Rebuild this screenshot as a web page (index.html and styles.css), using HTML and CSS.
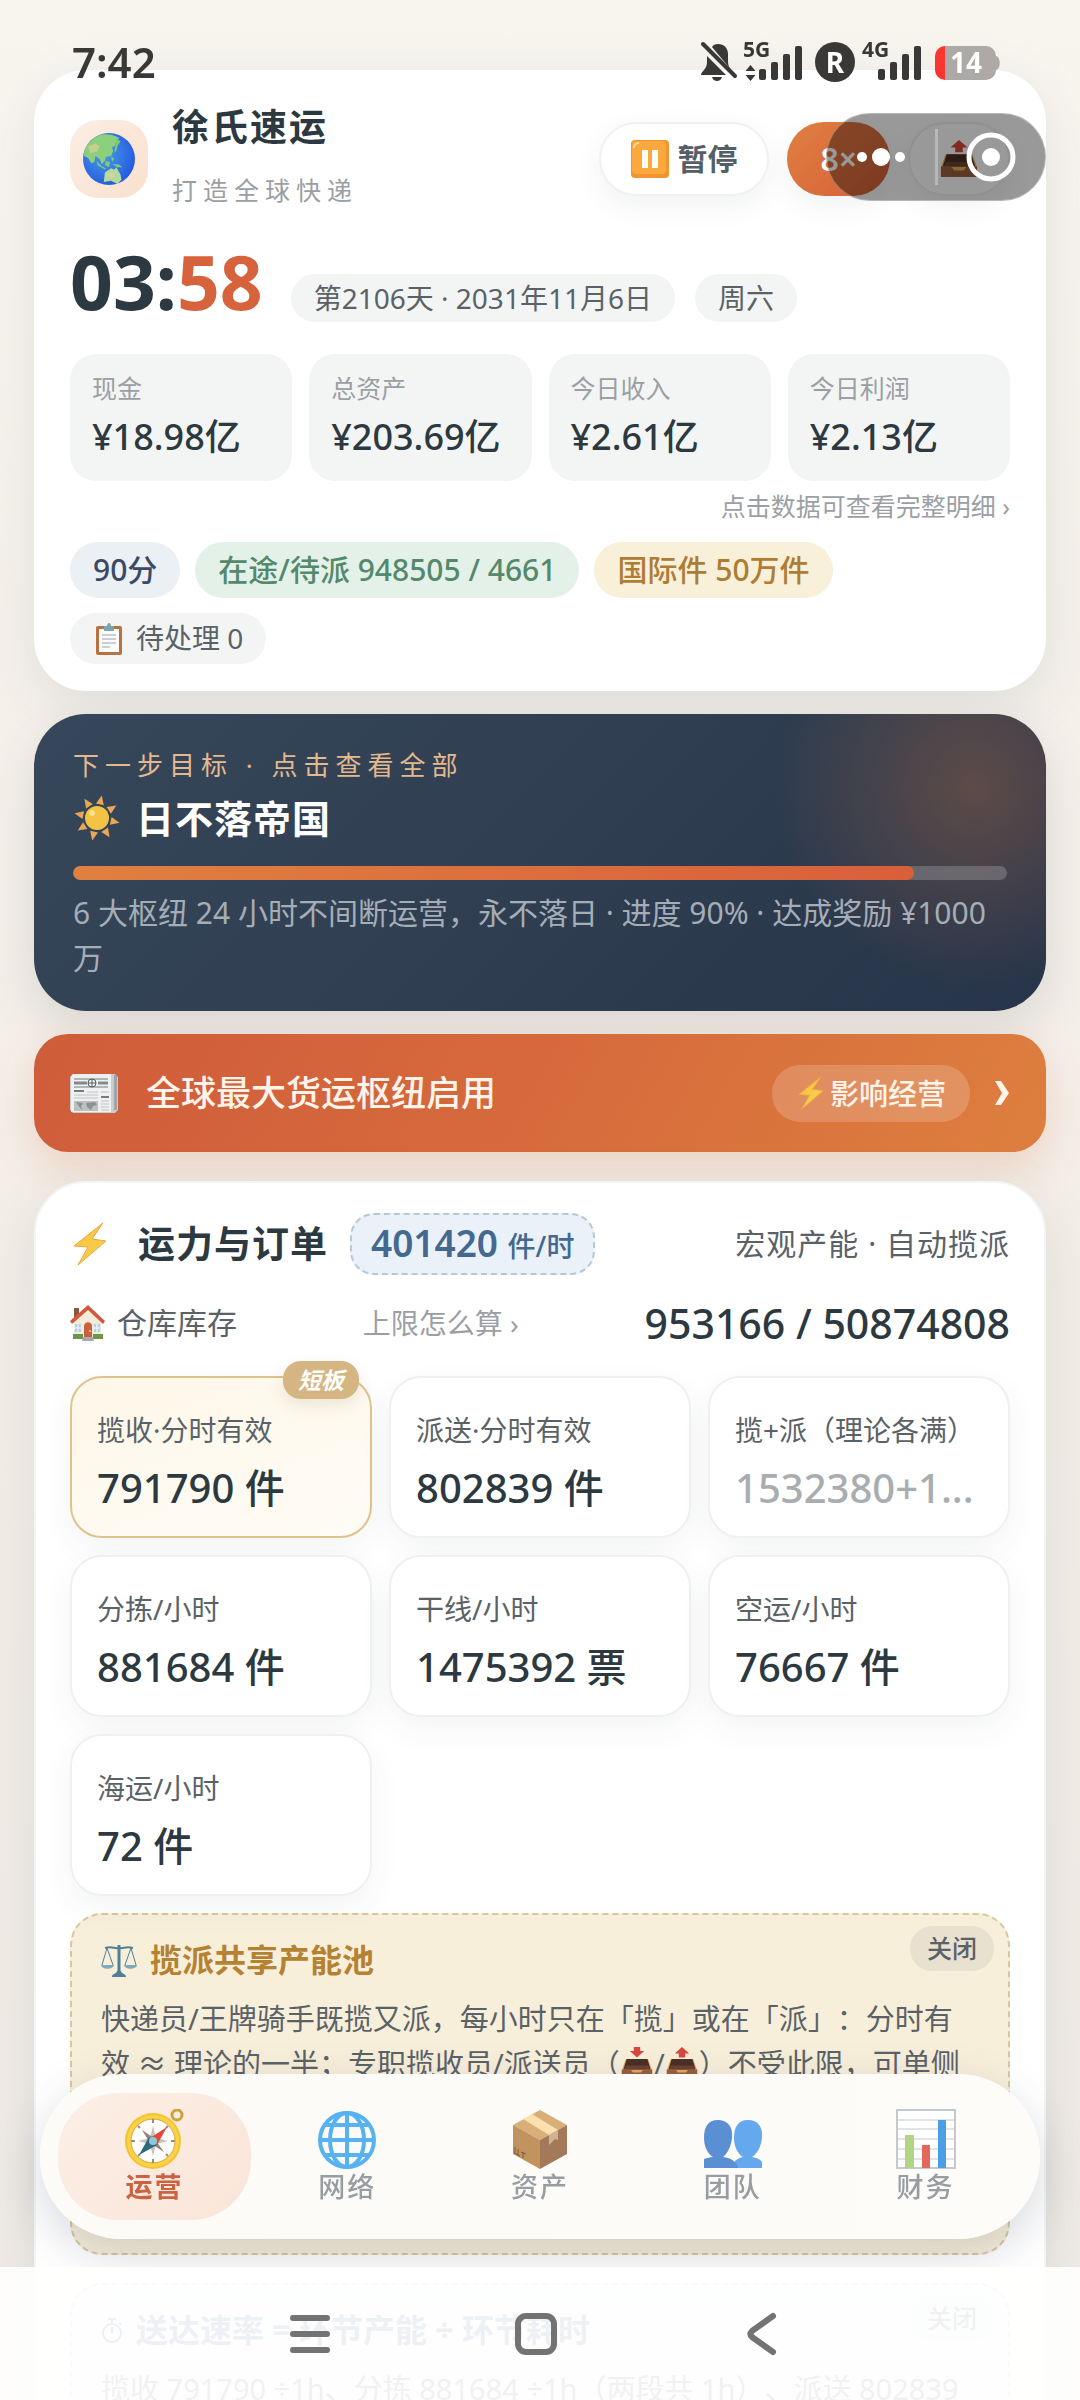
FILE: index.html
```html
<!DOCTYPE html>
<html lang="zh-CN">
<head>
  <meta charset="UTF-8">
  <meta name="viewport" content="width=device-width, initial-scale=1.0">
  <title>徐氏速运</title>
  <link rel="stylesheet" href="styles.css">
</head>
<body>
  <!-- shared icons -->
  <svg class="defs" aria-hidden="true">
    <defs>
      <linearGradient id="boltFill" x1="0" y1="0" x2="1" y2="1">
        <stop offset="0" stop-color="#f9c23c"/>
        <stop offset="1" stop-color="#f7d154"/>
      </linearGradient>
      <radialGradient id="seaFill" cx="0.4" cy="0.4" r="0.65">
        <stop offset="0" stop-color="#4a9be8"/>
        <stop offset="1" stop-color="#2459e0"/>
      </radialGradient>
      <symbol id="bolt" viewBox="0 0 34 44">
        <path d="M30 1 1 24l14 1L5 43l28-24-14-2z" fill="url(#boltFill)" stroke="#e9a93a" stroke-width="1" stroke-linejoin="round"/>
      </symbol>
      <symbol id="tray" viewBox="0 0 40 26">
        <path d="M6 1h28l5 14v10H1V15z" fill="#e8a860"/>
        <path d="M7 1h26l4 13H3z" fill="#4a2f24"/>
        <path d="M6 9h28l2 5H4z" fill="#6b4230"/>
        <path d="M1 14h11l3 4h10l3-4h11v11H1z" fill="#9a5f3f"/>
      </symbol>
      <symbol id="outbox" viewBox="0 0 40 40">
        <use href="#tray" x="0" y="14" width="40" height="26"/>
        <path d="M20 0l9 8h-5v5h-8V8h-5z" fill="#d9463c"/>
      </symbol>
      <symbol id="inbox" viewBox="0 0 40 40">
        <use href="#tray" x="0" y="14" width="40" height="26"/>
        <path d="M20 13l9-8h-5V0h-8v5h-5z" fill="#d9463c"/>
      </symbol>
    </defs>
  </svg>

  <div class="status-bar">
    <span class="status-time">7:42</span>
    <svg class="status-icons" viewBox="0 0 304 44" role="img" aria-label="手机状态">
      <g fill="#3a3836">
        <path d="M12 7C13 5 15 4 18 4c6 0 10 4 10 10v8c0 4 2 6 4 9z"/>
        <path d="M7 16 26 35H1c0-4 6-5 6-13z"/>
        <path d="M12 37h10c-1 3-3 4-5 4s-4-1-5-4z"/>
        <path d="M3 4 35 36" stroke="#3a3836" stroke-width="4" stroke-linecap="round"/>
        <text class="net" x="43" y="17">5G</text>
        <path d="M50.5 25l5 6h-10zM50.5 41l5-6h-10z"/>
        <rect x="59" y="29" width="7" height="11" rx="2"/>
        <rect x="71" y="22" width="7" height="18" rx="2"/>
        <rect x="83" y="14" width="7" height="26" rx="2"/>
        <rect x="95" y="6" width="7" height="34" rx="2"/>
        <circle cx="135" cy="22" r="20"/>
        <text class="net" x="162" y="17">4G</text>
        <rect x="178" y="29" width="7" height="11" rx="2"/>
        <rect x="190" y="22" width="7" height="18" rx="2"/>
        <rect x="202" y="14" width="7" height="26" rx="2"/>
        <rect x="214" y="6" width="7" height="34" rx="2"/>
      </g>
      <text class="roam" x="135" y="33">R</text>
      <path d="M245 6h41a10 10 0 0 1 10 10c5 1 5 13 0 14a10 10 0 0 1-10 10h-41z" fill="#aca9a6"/>
      <path d="M245 6a10 10 0 0 0-10 10v14a10 10 0 0 0 10 10z" fill="#fb3530"/>
      <text class="battery" x="266" y="33">14</text>
    </svg>
  </div>

  <div class="capsule">
    <button class="capsule-btn" aria-label="更多">
      <svg width="52" height="24" viewBox="0 0 52 24" fill="#fff"><circle cx="7" cy="12" r="5"/><circle cx="26" cy="12" r="9"/><circle cx="45" cy="12" r="5"/></svg>
    </button>
    <span class="capsule-line"></span>
    <button class="capsule-btn" aria-label="关闭小程序">
      <svg width="50" height="50" viewBox="0 0 50 50"><circle cx="25" cy="25" r="22" fill="none" stroke="#fff" stroke-width="5"/><circle cx="25" cy="25" r="9" fill="#fff"/></svg>
    </button>
  </div>

  <main class="page">
    <section class="card header-card">
      <div class="brand-row">
        <div class="logo">
          <svg width="52" height="52" viewBox="0 0 50 50">
            <circle cx="25" cy="25" r="25" fill="url(#seaFill)"/>
            <path d="M14 3C6 7 1 14 1 22l4 2 3 5 3-1 1-6 4 3 2 5 3-3 1-4 5-1 2-5-1-3 3-2 1-5 3-2C29 1 19 0 14 3z" fill="#8ccf7c"/>
            <path d="M5 13l7-3 4 3-3 5-6 1z" fill="#c6d08a"/>
            <path d="M32 5l4 3-3 5-1 4-2 2 1-7zM27 22l3 3-2 3zM13 27l5 5 4 2-1 1-7-4zM22 27l4 1-1 5-4-2zM28 30l6 0 4 3-5 0z" fill="#7fca74"/>
            <path d="M21 38l6-4 3 1 2-2 4 7 1 5-4 4-6-3-7 1z" fill="#b4d99a"/>
            <path d="M23 40l5-2 3 3-4 3z" fill="#d3d69c"/>
          </svg>
        </div>
        <div class="brand">
          <h1 class="brand-name">徐氏速运</h1>
          <p class="brand-sub">打造全球快递</p>
        </div>
        <div class="header-actions">
          <button class="pill-btn">
            <svg width="38" height="38" viewBox="0 0 38 38"><rect width="38" height="38" rx="4" fill="#f2952e"/><rect x="1" y="1" width="34" height="33" rx="4" fill="#fba83c"/><path d="M3 8c0-3 2-5 5-5" stroke="#ffd79a" stroke-width="2" fill="none"/><path d="M11 10h6v18h-6zM21 10h6v18h-6z" fill="#fffdf6"/></svg>
            暂停
          </button>
          <button class="pill-btn speed-btn">8×</button>
          <button class="pill-btn export-btn" aria-label="导出"><svg width="38" height="38"><use href="#outbox"/></svg></button>
        </div>
      </div>

      <div class="clock-row">
        <div class="clock">03:<span class="clock-min">58</span></div>
        <span class="date-pill">第2106天 · 2031年11月6日</span>
        <span class="date-pill">周六</span>
      </div>

      <div class="stats">
        <button class="stat"><span class="stat-label">现金</span><span class="stat-value">¥18.98亿</span></button>
        <button class="stat"><span class="stat-label">总资产</span><span class="stat-value">¥203.69亿</span></button>
        <button class="stat"><span class="stat-label">今日收入</span><span class="stat-value">¥2.61亿</span></button>
        <button class="stat"><span class="stat-label">今日利润</span><span class="stat-value">¥2.13亿</span></button>
      </div>
      <p class="stats-hint">点击数据可查看完整明细 ›</p>

      <div class="chips">
        <span class="chip chip-blue">90分</span>
        <span class="chip chip-green">在途/待派 948505 / 4661</span>
        <span class="chip chip-gold">国际件 50万件</span>
        <button class="chip chip-plain">
          <svg width="26" height="32" viewBox="0 0 26 32"><rect x="0" y="3" width="26" height="29" rx="2" fill="#b9713f"/><rect x="3" y="6" width="20" height="23" fill="#fbfbfb"/><path d="M6 12h14M6 16h14M6 20h14M6 24h8" stroke="#b8c2cc" stroke-width="1.500"/><path d="M8 3h3c0-4 4-4 4 0h3v5H8z" fill="#7fa3ae"/></svg>
          待处理 0
        </button>
      </div>
    </section>

    <section class="goal">
      <p class="goal-tip">下一步目标 · 点击查看全部</p>
      <h2 class="goal-title">
        <svg width="48" height="48" viewBox="-24 -24 48 48">
          <g fill="#eaa653">
            <path id="ray" d="M0-23 4-14-4-14z" transform="rotate(12)"/>
            <use href="#ray" transform="rotate(45)"/>
            <use href="#ray" transform="rotate(90)"/>
            <use href="#ray" transform="rotate(135)"/>
            <use href="#ray" transform="rotate(180)"/>
            <use href="#ray" transform="rotate(225)"/>
            <use href="#ray" transform="rotate(270)"/>
            <use href="#ray" transform="rotate(315)"/>
          </g>
          <circle r="12" fill="#f5c344"/>
          <circle cx="-5" cy="-5" r="3" fill="#fbe08a"/>
        </svg>
        日不落帝国
      </h2>
      <div class="progress"><div class="progress-fill" style="width: 90%"></div></div>
      <p class="goal-desc">6 大枢纽 24 小时不间断运营，永不落日 · 进度 90% · 达成奖励 ¥1000万</p>
    </section>

    <a class="news" href="#">
      <svg width="48" height="39" viewBox="0 0 48 39">
        <path d="M3 0h42l3 3v33l-3 3H3l-3-3V3z" fill="#c9cdd0"/>
        <path d="M3 0h38v38H1V3z" fill="#eff0f0"/>
        <path d="M44 1h3v35h-3z" fill="#9ea3a6"/>
        <path d="M4 5h34M4 13h34" stroke="#777b7e"/>
        <path d="M4 9h13M28 9h10" stroke="#85898c" stroke-width="3"/>
        <circle cx="22" cy="9" r="4" fill="#f4f4f4" stroke="#55595c"/>
        <path d="M18 9h8M22 5v8" stroke="#55595c"/>
        <path d="M4 17h10M31 23h8" stroke="#777b7e" stroke-width="2"/>
        <path d="M4 21h24M4 24h24M17 18h11M31 18h8M31 27h8M31 30h8M31 33h8M31 36h8" stroke="#bfc3c5"/>
        <path d="M4 27h24v10H4z" fill="#bcc0c2"/>
        <path d="M6 28l7 1-2 4 2 3-3-2zM16 29l9-1 2 3-4 1-2 4-4-3z" fill="#8c9194"/>
      </svg>
      <span class="news-title">全球最大货运枢纽启用</span>
      <span class="news-tag"><svg width="30" height="34"><use href="#bolt"/></svg>影响经营</span>
      <svg width="16" height="26" viewBox="0 0 16 26"><path d="M1 1h6l8 12-8 12H1l7-12z" fill="#fff3ea"/></svg>
    </a>

    <section class="card capacity">
      <div class="cap-head">
        <svg class="cap-bolt" width="36" height="44"><use href="#bolt"/></svg>
        <h2 class="cap-title">运力与订单</h2>
        <button class="rate">401420 <span class="rate-unit">件/时</span></button>
        <span class="cap-note">宏观产能 · 自动揽派</span>
      </div>

      <div class="stock">
        <span class="stock-name">
          <svg width="35" height="36" viewBox="0 0 35 36">
            <path d="M4 3h5v10H4z" fill="#8e5640"/>
            <path d="M4 16 18 3l13 13v16H4z" fill="#f6ead9"/>
            <path d="M18 0 0 16l2 3L18 5l15 14 2-3z" fill="#cf5a3c"/>
            <path d="M5 19h6v8H5zM24 19h6v8h-6z" fill="#a9d3e6"/>
            <path d="M8 19v8M5 23h6M27 19v8M24 23h6" stroke="#fff"/>
            <path d="M14 32V21c0-5 8-5 8 0v11z" fill="#c85f3e"/>
            <circle cx="20" cy="26" r="1" fill="#f4cf7a"/>
            <path d="M3 29h10v5H3zM23 29h10v5H23z" fill="#6f9447"/>
            <path d="M13 32h10l1 4H12z" fill="#a9a9ab"/>
          </svg>
          仓库库存
        </span>
        <a class="stock-help" href="#">上限怎么算 ›</a>
        <strong class="stock-value">953166 / 50874808</strong>
      </div>

      <div class="tiles">
        <div class="tile tile-weak">
          <em class="weak-badge">短板</em>
          <div class="tile-label">揽收·分时有效</div>
          <div class="tile-value">791790 件</div>
        </div>
        <div class="tile">
          <div class="tile-label">派送·分时有效</div>
          <div class="tile-value">802839 件</div>
        </div>
        <div class="tile">
          <div class="tile-label">揽+派（理论各满）</div>
          <div class="tile-value tile-muted">1532380+1...</div>
        </div>
        <div class="tile">
          <div class="tile-label">分拣/小时</div>
          <div class="tile-value">881684 件</div>
        </div>
        <div class="tile">
          <div class="tile-label">干线/小时</div>
          <div class="tile-value">1475392 票</div>
        </div>
        <div class="tile">
          <div class="tile-label">空运/小时</div>
          <div class="tile-value">76667 件</div>
        </div>
        <div class="tile">
          <div class="tile-label">海运/小时</div>
          <div class="tile-value">72 件</div>
        </div>
      </div>

      <div class="tip">
        <div class="tip-head">
          <h3 class="tip-title">
            <svg width="36" height="36" viewBox="0 0 36 36" fill="none" stroke="#4f8096" stroke-width="2">
              <path d="M18 3v28" stroke-width="3"/>
              <path d="M4 6c8-2 9 1 14 0 5 1 6-2 14 0"/>
              <path d="M6 6 1 23M6 6l6 17M30 6l-6 17M30 6l5 17" stroke-width="1"/>
              <path d="M0 23h13c-1 5-12 5-13 0zM23 23h13c-1 5-12 5-13 0z" fill="#7fa9ba" stroke="none"/>
              <path d="M11 35c0-4 4-2 5-6h4c1 4 5 2 5 6z" fill="#4f8096" stroke="none"/>
            </svg>
            揽派共享产能池
          </h3>
          <button class="close-btn">关闭</button>
        </div>
        <p class="tip-text">快递员/王牌骑手既揽又派，每小时只在「揽」或在「派」：分时有效 ≈ 理论的一半；专职揽收员/派送员（<svg class="inline-icon" viewBox="0 0 40 40"><use href="#inbox"/></svg>/<svg class="inline-icon" viewBox="0 0 40 40"><use href="#outbox"/></svg>）不受此限，可单侧</p>
      </div>

      <div class="tip tip-blue">
        <div class="tip-head">
          <h3 class="tip-title">
            <svg width="22" height="28" viewBox="0 0 22 28" fill="none" stroke="#3d5f8f" stroke-width="2"><circle cx="11" cy="17" r="9"/><path d="M11 17v-6M7 3h8M11 3v5M18 7l2 2"/></svg>
            送达速率 = 环节产能 ÷ 环节耗时
          </h3>
          <button class="close-btn">关闭</button>
        </div>
        <p class="tip-text">揽收 791790 ÷1h、分拣 881684 ÷1h（两段共 1h）、派送 802839</p>
      </div>
    </section>
  </main>

  <nav class="tabs">
    <button class="tab active">
      <svg width="60" height="60" viewBox="0 0 60 60">
        <circle cx="53" cy="6" r="5" fill="none" stroke="#cfa23a" stroke-width="3"/>
        <circle cx="29" cy="32" r="28" fill="#f4c430"/>
        <circle cx="29" cy="32" r="26" fill="#fad24a"/>
        <circle cx="29" cy="32" r="22" fill="#fdfdfd" stroke="#d9a92c"/>
        <path d="M29 10v4M29 50v4M7 32h4M47 32h4M14 17l2 2M42 45l2 2M42 19l2-2M14 47l2-2" stroke="#a08a78" stroke-width="2"/>
        <path d="M29 17l3 12 12 3-12 3-3 12-3-12-12-3 12-3z" fill="#cdbfb4"/>
        <path d="M18 21l12 8 10 14-14-9z" fill="#94847a"/>
        <path d="M43 18 33 36l-7-7z" fill="#e0483e"/>
        <path d="M15 46 25 28l8 8z" fill="#2d6a80"/>
        <circle cx="29" cy="32" r="4" fill="#8cc8dc"/>
      </svg>
      <span>运营</span>
    </button>
    <button class="tab">
      <svg width="60" height="60" viewBox="0 0 60 60" fill="none" stroke="#56b2f0" stroke-width="4">
        <circle cx="30" cy="31" r="27"/>
        <ellipse cx="30" cy="31" rx="17" ry="27"/>
        <path d="M30 4v54M3 31h54M8 16h44M8 46h44"/>
      </svg>
      <span>网络</span>
    </button>
    <button class="tab">
      <svg width="60" height="60" viewBox="0 0 60 60">
        <path d="M30 1 57 16 30 31 3 16z" fill="#d9ae78"/>
        <path d="M3 16 30 31v29L3 45z" fill="#c1935f"/>
        <path d="M57 16 30 31v29l27-15z" fill="#a3795a"/>
        <path d="M22 5 48 21l-9 5L13 10z" fill="#fbe0b0"/>
        <path d="M39 26l9-5v10l-3-1-6 6z" fill="#d2b295"/>
        <path d="M5 38v6M8 40v6M4 44l6 3M13 43v6M11 43l5 2" stroke="#7d5a3a"/>
      </svg>
      <span>资产</span>
    </button>
    <button class="tab">
      <svg width="60" height="60" viewBox="0 0 60 60">
        <path d="M45 11c10 0 15 7 14 18-1 9-5 16-10 19 6 1 9 3 10 5v6H32V52c2-2 4-3 8-4-5-3-9-10-9-19 0-11 4-18 14-18z" fill="#64a9ee"/>
        <path d="M15 11c10 0 15 7 14 18-1 9-5 16-9 19 9 1 14 5 15 11H1v-9c3-1 6-2 9-2-5-3-9-10-9-19 0-11 4-18 14-18z" fill="#5a8fd4"/>
      </svg>
      <span>团队</span>
    </button>
    <button class="tab">
      <svg width="60" height="60" viewBox="0 0 60 60">
        <rect x="1" y="1" width="58" height="58" fill="#fff" stroke="#c3c9ce" stroke-width="2"/>
        <path d="M1 11h58M1 20h58M1 30h58M1 40h58M1 50h58" stroke="#c3c9ce"/>
        <path d="M9 26h9v33H9z" fill="#b3d487"/>
        <path d="M26 36h8v23h-8z" fill="#e3685c"/>
        <path d="M42 11h8v48h-8z" fill="#4aa0e6"/>
      </svg>
      <span>财务</span>
    </button>
  </nav>

  <div class="system-nav">
    <button class="system-btn" aria-label="最近任务"><svg width="44" height="44" viewBox="0 0 44 44"><path d="M5 6h34M5 22h34M5 38h34"/></svg></button>
    <button class="system-btn" aria-label="主屏幕"><svg width="44" height="44" viewBox="0 0 44 44"><rect x="4" y="4" width="36" height="36" rx="8"/></svg></button>
    <button class="system-btn" aria-label="返回"><svg width="44" height="44" viewBox="0 0 44 44"><path d="M33 4 12 19q-3 3 0 6l21 15"/></svg></button>
  </div>
</body>
</html>
```
FILE: styles.css
```css
* {
  box-sizing: border-box;
}

body {
  margin: 0;
  height: 100vh;
  overflow: hidden;
  background: linear-gradient(to bottom, #f8f5ef, #f3eee7 50%, #efebe5);
  color: #2d3940;
  font-family: "Noto Sans", "Noto Sans CJK SC", sans-serif;
  font-size: 29px;
}

h1, h2, h3, p {
  margin: 0;
}

button {
  border: none;
  background: none;
  padding: 0;
  font: inherit;
  color: inherit;
  cursor: pointer;
}

svg {
  flex: none;
}

.defs {
  position: absolute;
  width: 0;
  height: 0;
}

/* status bar */
.status-bar {
  position: fixed;
  top: 0;
  left: 0;
  right: 0;
  z-index: 30;
  display: flex;
  justify-content: space-between;
  align-items: center;
  padding: 40px 76px 0 72px;
  color: #3a3836;
}

.status-time {
  font-size: 42px;
  line-height: 44px;
  font-weight: 600;
}

.status-icons {
  width: 304px;
  height: 44px;
  overflow: visible;
}

.net {
  font-size: 21px;
  font-weight: 700;
}

.roam, .battery {
  fill: #ffffff;
  font-size: 28px;
  font-weight: 700;
  text-anchor: middle;
}

.capsule {
  position: fixed;
  top: 113px;
  right: 34px;
  z-index: 25;
  display: flex;
  align-items: center;
  gap: 28px;
  height: 88px;
  padding: 0 29px 0 28px;
  border: 1px solid rgba(255, 255, 255, 0.3);
  border-radius: 44px;
  background: rgba(0, 0, 0, 0.4);
}

.capsule-btn {
  display: flex;
}

.capsule-line {
  width: 3px;
  height: 56px;
  background: rgba(255, 255, 255, 0.3);
}

/* cards */
.page {
  padding: 70px 34px 0;
}

.card {
  padding-left: 36px;
  padding-right: 36px;
  border-radius: 52px;
  background: #ffffff;
  box-shadow: 0 16px 56px rgba(50, 65, 80, 0.1);
}

.header-card {
  padding-top: 35px;
  padding-bottom: 27px;
}

.brand-row {
  display: flex;
  align-items: center;
  gap: 24px;
}

.logo {
  display: flex;
  align-items: center;
  justify-content: center;
  width: 78px;
  height: 78px;
  border-radius: 28px;
  background: linear-gradient(135deg, #fbeee4, #fae0ce);
}

.brand-name {
  font-size: 37px;
  line-height: 44px;
  font-weight: 700;
  letter-spacing: 2px;
}

.brand-sub {
  margin-top: 19px;
  font-size: 25px;
  line-height: 44px;
  letter-spacing: 6px;
  color: #9b9fa4;
}

.header-actions {
  display: flex;
  gap: 18px;
  margin-left: auto;
}

.pill-btn {
  display: flex;
  align-items: center;
  gap: 8px;
  height: 74px;
  padding: 0 30px;
  border: 2px solid #f1f1f1;
  border-radius: 37px;
  background: #ffffff;
  color: #555e66;
  font-size: 30px;
  line-height: 40px;
  font-weight: 600;
  box-shadow: 0 10px 28px rgba(50, 65, 80, 0.07);
}

.speed-btn {
  border: none;
  padding: 0 33px;
  color: #ffffff;
  background: linear-gradient(135deg, #e07f40, #d4603a);
  font-size: 32px;
}

.clock-row {
  display: flex;
  align-items: flex-end;
  gap: 20px;
  margin-top: 28px;
}

.clock {
  margin-right: 8px;
  font-size: 75px;
  line-height: 82px;
  font-weight: 700;
}

.clock-min {
  color: #d7633d;
}

.date-pill {
  padding: 0 23px;
  border-radius: 24px;
  background: #f3f5f5;
  color: #5b6267;
  font-size: 28px;
  line-height: 48px;
}

.stats {
  display: grid;
  grid-template-columns: repeat(4, 1fr);
  gap: 17px;
  margin-top: 32px;
}

.stat {
  display: flex;
  flex-direction: column;
  gap: 6px;
  padding: 16px 22px 19px;
  border-radius: 26px;
  background: #f3f5f5;
  text-align: left;
}

.stat-label {
  font-size: 25px;
  line-height: 36px;
  color: #9b9fa4;
}

.stat-value {
  font-size: 36px;
  line-height: 50px;
  font-weight: 500;
}

.stats-hint {
  margin-top: 7px;
  font-size: 25px;
  line-height: 36px;
  color: #9b9fa4;
  text-align: right;
}

.chips {
  display: flex;
  flex-wrap: wrap;
  gap: 15px;
  margin-top: 18px;
}

.chip {
  padding: 0 23px;
  border-radius: 28px;
  font-size: 30px;
  line-height: 56px;
  font-weight: 500;
}

.chip-blue {
  background: #ebf0f5;
  color: #3a4a66;
}

.chip-green {
  background: #e4f1e8;
  color: #55896c;
}

.chip-gold {
  background: #f9f0da;
  color: #ae7d35;
}

.chip-plain {
  display: flex;
  align-items: center;
  gap: 14px;
  padding-left: 26px;
  background: #f3f5f5;
  color: #5b6267;
  font-size: 28px;
  line-height: 51px;
  font-weight: 400;
}

/* next goal */
.goal {
  margin-top: 23px;
  padding: 31px 39px;
  border-radius: 52px;
  background:
    radial-gradient(circle at 93% 25%, rgba(224, 123, 60, 0.28), rgba(224, 123, 60, 0) 200px),
    linear-gradient(135deg, #37475b, #2f3e50 50%, #27344a);
  box-shadow: 0 16px 48px rgba(50, 65, 80, 0.14);
  color: #ffffff;
}

.goal-tip {
  font-size: 26px;
  line-height: 40px;
  letter-spacing: 6px;
  color: #e5b98e;
}

.goal-title {
  display: flex;
  align-items: center;
  gap: 15px;
  margin-top: 8px;
  font-size: 38px;
  line-height: 50px;
  font-weight: 700;
  letter-spacing: 1px;
}

.progress {
  height: 14px;
  margin-top: 23px;
  border-radius: 7px;
  background: rgba(255, 255, 255, 0.2);
  overflow: hidden;
}

.progress-fill {
  height: 100%;
  border-radius: 7px;
  background: linear-gradient(to right, #e08040, #d95f3b);
}

.goal-desc {
  margin-top: 10px;
  font-size: 30px;
  line-height: 45px;
  color: #a5adb6;
}

/* news banner */
.news {
  display: flex;
  align-items: center;
  height: 118px;
  margin-top: 23px;
  padding: 0 36px;
  border-radius: 34px;
  background: linear-gradient(120deg, #cf5c3a, #d66a3c 50%, #de7f3e);
  box-shadow: 0 16px 40px rgba(215, 99, 61, 0.2);
  color: #fff3ea;
  text-decoration: none;
}

.news-title {
  margin-left: 28px;
  font-size: 35px;
  line-height: 50px;
  font-weight: 500;
}

.news-tag {
  display: flex;
  align-items: center;
  gap: 4px;
  margin-left: auto;
  margin-right: 24px;
  padding: 0 24px;
  border-radius: 28px;
  background: rgba(255, 255, 255, 0.18);
  font-size: 29px;
  line-height: 57px;
  font-weight: 500;
}

/* capacity */
.capacity {
  margin-top: 29px;
  padding: 30px 34px 40px;
  border: 2px solid #f4f5f5;
}

.cap-head {
  display: flex;
  align-items: center;
  line-height: 50px;
}

.cap-title {
  margin-left: 30px;
  font-size: 37px;
  font-weight: 700;
  letter-spacing: 1px;
}

.cap-bolt {
  margin-left: 2px;
}

.rate {
  height: 62px;
  margin-left: 22px;
  padding: 0 19px;
  border: 2px dashed #b5c8da;
  border-radius: 24px;
  background: #ebf1f8;
  color: #44688f;
  font-size: 37px;
  line-height: 56px;
  font-weight: 600;
}

.rate-unit {
  font-size: 28px;
  font-weight: 500;
}

.cap-note {
  margin-left: auto;
  font-size: 30px;
  letter-spacing: 1px;
  color: #5b6267;
}

.stock {
  display: flex;
  align-items: center;
  justify-content: space-between;
  margin-top: 23px;
  line-height: 50px;
}

.stock-name {
  display: flex;
  align-items: center;
  gap: 12px;
  font-size: 30px;
  color: #5b6267;
}

.stock-help {
  font-size: 28px;
  color: #9b9fa4;
  text-decoration: none;
}

.stock-value {
  font-size: 41px;
  font-weight: 500;
}

.tiles {
  display: grid;
  grid-template-columns: repeat(3, 1fr);
  gap: 17px;
  margin-top: 28px;
}

.tile {
  position: relative;
  padding: 32px 25px 22px;
  border: 2px solid #eff1f1;
  border-radius: 32px;
  background: #ffffff;
  box-shadow: 0 12px 32px rgba(50, 75, 80, 0.06);
}

.tile-weak {
  border-color: #dfc38c;
  background: linear-gradient(160deg, #fdf7e8, #fffcf6);
}

.weak-badge {
  position: absolute;
  top: -17px;
  right: 11px;
  padding: 0 15px;
  border-radius: 18px;
  background: #d5b582;
  color: #ffffff;
  font-size: 23px;
  line-height: 38px;
  font-weight: 700;
  box-shadow: 0 6px 16px rgba(120, 90, 40, 0.12);
}

.tile-label {
  font-size: 28px;
  line-height: 40px;
  color: #5b6267;
  white-space: nowrap;
}

.tile-value {
  margin-top: 12px;
  font-size: 40px;
  line-height: 52px;
  font-weight: 500;
  white-space: nowrap;
}

.tile-muted {
  color: #a9adb0;
}

.tip {
  min-height: 342px;
  margin-top: 17px;
  padding: 11px 14px 0;
  border: 2px dashed #d8c69f;
  border-radius: 32px;
  background: #f8efda;
}

.tip-head {
  display: flex;
  align-items: flex-start;
  justify-content: space-between;
}

.tip-title {
  display: flex;
  align-items: center;
  gap: 13px;
  padding: 11px 0 0 15px;
  font-size: 32px;
  line-height: 46px;
  font-weight: 700;
  color: #b58233;
}

.close-btn {
  padding: 0 17px;
  border-radius: 22px;
  background: #e9e1d0;
  color: #5b6267;
  font-size: 25px;
  line-height: 45px;
  font-weight: 500;
}

.tip-text {
  padding: 13px 15px 0;
  font-size: 29px;
  line-height: 45px;
  color: #5b6267;
  text-spacing-trim: space-all;
}

.inline-icon {
  width: 32px;
  height: 32px;
  margin: 0 1px;
  vertical-align: -4px;
}

.tip-blue {
  margin-top: 28px;
  border-color: #b5c8da;
  background: #ebf1f8;
}

.tip-blue .tip-title {
  color: #3d5f8f;
}

.tip-blue .close-btn {
  background: #dfe5ec;
}

/* bottom tabs */
.tabs {
  position: fixed;
  left: 40px;
  right: 40px;
  bottom: 161px;
  z-index: 10;
  display: flex;
  padding: 19px 18px;
  border-radius: 82px;
  background: linear-gradient(to right, #fcfbf8, #fefcf8);
  box-shadow: 0 16px 48px rgba(50, 65, 90, 0.2);
}

.tab {
  flex: 1;
  display: flex;
  flex-direction: column;
  align-items: center;
  padding: 16px 0 15px;
  border-radius: 60px;
  color: #989da2;
  font-size: 27px;
  line-height: 36px;
  font-weight: 500;
  letter-spacing: 2px;
}

.tab.active {
  background: linear-gradient(135deg, #fcefe6, #fae5d8);
  color: #cb6241;
  font-weight: 600;
}

/* phone navigation */
.system-nav {
  position: fixed;
  left: 0;
  right: 0;
  bottom: 0;
  z-index: 20;
  display: flex;
  align-items: center;
  justify-content: center;
  gap: 182px;
  height: 133px;
  padding-right: 9px;
  background: rgba(255, 255, 254, 0.91);
}

.system-btn {
  display: flex;
}

.system-btn svg {
  fill: none;
  stroke: #737373;
  stroke-width: 6;
  stroke-linecap: round;
  stroke-linejoin: round;
}
```
